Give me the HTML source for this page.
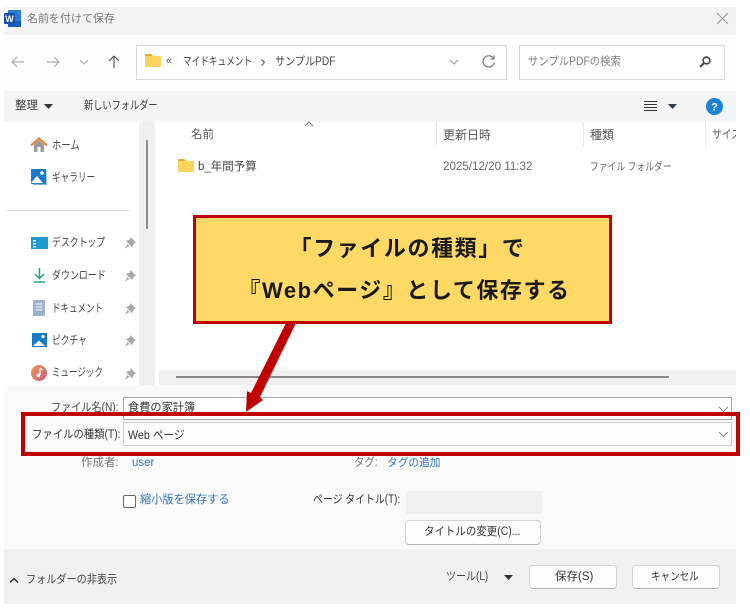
<!DOCTYPE html>
<html lang="ja"><head><meta charset="utf-8"><style>
html,body{margin:0;padding:0;background:#fff}
#p{position:relative;width:750px;height:610px;overflow:hidden;background:#fff;font-family:"Liberation Sans","Noto Sans CJK JP",sans-serif;font-size:11.5px;color:#333}
#p div,#p svg{position:absolute}
.t{white-space:nowrap;line-height:16px;height:16px;transform-origin:0 50%}
.g{color:#666}.b{color:#2f74b8}
.btn{background:#fdfdfd;border:1px solid #d2d2d2;border-bottom-color:#b5b5b5;border-radius:4px;box-sizing:border-box;text-align:center;color:#333}
.box{background:#fff;border:1px solid #d9d9d9;box-sizing:border-box}
</style></head><body><div id="p">
<div style="left:4px;top:7px;width:732px;height:28px;background:#f3f3f3"></div>
<div style="left:4px;top:35px;width:732px;height:87px;background:#fdfdfd"></div>
<div style="left:4px;top:91px;width:732px;height:31px;background:#f3f4f6"></div>
<div style="left:4px;top:122px;width:135px;height:263px;background:#fff"></div>
<div style="left:139px;top:122px;width:16px;height:263px;background:#efefef"></div>
<div style="left:146px;top:140px;width:2px;height:89px;background:#8d8d8d"></div>
<div style="left:159px;top:370px;width:577px;height:15px;background:#f1f1f1"></div>
<div style="left:176px;top:376px;width:493px;height:2px;background:#8a8a8a"></div>
<div style="left:4px;top:385px;width:732px;height:164px;background:#f9f9f9"></div>
<div style="left:4px;top:549px;width:732px;height:55px;background:#f0f0f0"></div>

<svg style="left:4px;top:10px" width="17" height="17" viewBox="0 0 17 17"><rect x="4" y="0" width="13" height="17" rx="1" fill="#2b7cd3"/><rect x="4" y="11" width="13" height="6" fill="#185abd"/><rect x="0" y="3" width="11" height="11" rx="1" fill="#1650a8"/><text x="5.5" y="12" font-size="9" font-weight="700" fill="#fff" text-anchor="middle" font-family="Liberation Sans">W</text></svg>
<div class="t" style="left:27px;top:11px;color:#777;font-size:11px">名前を付けて保存</div>
<svg style="left:716px;top:12px" width="13" height="13" viewBox="0 0 13 13"><path d="M1 1L12 12M12 1L1 12" stroke="#999" stroke-width="1.1" fill="none"/></svg>

<svg style="left:10px;top:54px" width="120" height="16" viewBox="0 0 120 16" fill="none"><path d="M2 8H14M2 8L7 3M2 8L7 13" stroke="#aaa" stroke-width="1.2"/><path d="M37 8H49M49 8L44 3M49 8L44 13" stroke="#aaa" stroke-width="1.2"/><path d="M70 6L74 10L78 6" stroke="#aaa" stroke-width="1.2"/><path d="M104 2V14M104 2L99 7M104 2L109 7" stroke="#555" stroke-width="1.2"/></svg>
<div class="box" style="left:136px;top:45px;width:371px;height:35px"></div>
<svg style="left:144px;top:53px" width="18" height="16" viewBox="0 0 18 16"><path d="M1 2Q1 1 2 1H7L9 3H1Z" fill="#e8a820"/><rect x="1" y="3" width="16" height="11" rx="1" fill="#fbd35f"/></svg>
<div class="t" style="left:166px;top:53px;font-size:11px;color:#555">«</div>
<div class="t" style="left:183px;top:54px;color:#444;transform:scaleX(.75)">マイドキュメント</div>
<svg style="left:260px;top:58px" width="6" height="9" viewBox="0 0 6 9"><path d="M1.5 1.5L4.5 4.5L1.5 7.5" stroke="#555" stroke-width="1.1" fill="none"/></svg>
<div class="t" style="left:275px;top:54px;color:#444;transform:scaleX(.88)">サンプルPDF</div>
<svg style="left:449px;top:59px" width="10" height="7" viewBox="0 0 10 7"><path d="M1 1L5 5L9 1" stroke="#999" stroke-width="1.1" fill="none"/></svg>
<svg style="left:481px;top:54px" width="15" height="15" viewBox="0 0 15 15"><path d="M12.5 4.5A5.6 5.6 0 1 0 13.2 8.5" stroke="#777" stroke-width="1.2" fill="none"/><path d="M13 1.5V5H9.5" stroke="#777" stroke-width="1.2" fill="none"/></svg>
<div class="box" style="left:519px;top:45px;width:206px;height:35px"></div>
<div class="t g" style="left:528px;top:54px;color:#808080;transform:scaleX(.9)">サンプルPDFの検索</div>
<svg style="left:698px;top:55px" width="14" height="14" viewBox="0 0 14 14"><circle cx="8.5" cy="5.5" r="3.4" stroke="#444" stroke-width="1.6" fill="none"/><path d="M6 8L2 12" stroke="#444" stroke-width="2"/></svg>

<div class="t" style="left:15px;top:98px;color:#3a3a3a">整理</div>
<svg style="left:44px;top:104px" width="9" height="5" viewBox="0 0 9 5"><path d="M0 0H9L4.5 5Z" fill="#333"/></svg>
<div class="t" style="left:84px;top:98px;color:#3a3a3a;transform:scaleX(.8)">新しいフォルダー</div>
<svg style="left:644px;top:100px" width="13" height="12" viewBox="0 0 13 12"><path d="M0 1.5H13M0 4.5H13M0 7.5H13M0 10.5H13" stroke="#333" stroke-width="1"/></svg>
<svg style="left:668px;top:104px" width="9" height="5" viewBox="0 0 9 5"><path d="M0 0H9L4.5 5Z" fill="#2c3e50"/></svg>
<svg style="left:706px;top:98px" width="17" height="17" viewBox="0 0 17 17"><circle cx="8.5" cy="8.5" r="8.5" fill="#1a83d4"/><text x="8.5" y="12.5" font-size="11" font-weight="700" fill="#fff" text-anchor="middle" font-family="Liberation Sans">?</text></svg>

<div class="t" style="left:191px;top:127px;color:#555">名前</div>
<svg style="left:304px;top:121px" width="10" height="6" viewBox="0 0 10 6"><path d="M1 5L5 1L9 5" stroke="#777" stroke-width="1" fill="none"/></svg>
<div style="left:436px;top:122px;width:1px;height:25px;background:#e6e6e6"></div>
<div style="left:583px;top:122px;width:1px;height:25px;background:#e6e6e6"></div>
<div style="left:705px;top:122px;width:1px;height:25px;background:#e6e6e6"></div>
<div class="t" style="left:443px;top:127px;color:#555;font-size:12px">更新日時</div>
<div class="t" style="left:590px;top:127px;color:#555;font-size:12px">種類</div>
<div style="left:712px;top:122px;width:24px;height:25px;overflow:hidden"><div class="t" style="left:0;top:5px;color:#555;transform:scaleX(.85)">サイズ</div></div>

<svg style="left:177px;top:158px" width="18" height="16" viewBox="0 0 18 16"><path d="M1 2Q1 1 2 1H7L9 3H1Z" fill="#e8a820"/><rect x="1" y="3" width="16" height="11" rx="1" fill="#fbd35f"/></svg>
<div class="t" style="left:198px;top:159px;color:#444">b_年間予算</div>
<div class="t g" style="left:443px;top:159px;font-size:11.6px">2025/12/20 11:32</div>
<div class="t g" style="left:590px;top:159px;font-size:11px;transform:scaleX(.8)">ファイル フォルダー</div>

<svg style="left:30px;top:137px" width="18" height="16" viewBox="0 0 18 16"><path d="M4 7.5V15H14V7.5L9 3Z" fill="#9b9b9b"/><rect x="7.5" y="10" width="3" height="5" fill="#fff"/><path d="M1 8.5L9 1.5L17 8.5" stroke="#e58a3c" stroke-width="2.2" fill="none"/></svg>
<div class="t" style="left:52px;top:138px;color:#444;transform:scaleX(.81)">ホーム</div>
<svg style="left:31px;top:169px" width="16" height="17" viewBox="0 0 16 17"><rect x="0" y="0" width="15" height="15" fill="#1c78c8"/><circle cx="11" cy="4" r="1.8" fill="#fff"/><path d="M0 14L6 7L12 14Z" fill="#fff"/><path d="M2 15.5H16V2" stroke="#7fb4e2" stroke-width="1.3" fill="none"/></svg>
<div class="t" style="left:52px;top:170px;color:#444;transform:scaleX(.75)">ギャラリー</div>
<div style="left:7px;top:210px;width:122px;height:1px;background:#ddd"></div>

<svg style="left:31px;top:237px" width="17" height="13" viewBox="0 0 17 13"><rect width="17" height="12" fill="#1f9ccf"/><rect x="2" y="3" width="3" height="1.5" fill="#d5f2fb"/><rect x="2" y="6" width="3" height="1.5" fill="#d5f2fb"/><rect x="2" y="9" width="3" height="1.5" fill="#d5f2fb"/></svg>
<div class="t" style="left:52px;top:235px;color:#444;transform:scaleX(.77)">デスクトップ</div>
<svg style="left:33px;top:267px" width="13" height="17" viewBox="0 0 13 17" fill="none"><path d="M6.5 1V11M2 7L6.5 11.5L11 7" stroke="#22a57c" stroke-width="1.5"/><path d="M1 15H12" stroke="#22a57c" stroke-width="1.5"/></svg>
<div class="t" style="left:52px;top:268px;color:#444;transform:scaleX(.78)">ダウンロード</div>
<svg style="left:33px;top:300px" width="12" height="16" viewBox="0 0 12 16"><rect width="12" height="16" fill="#9db3cd"/><path d="M2.5 4H9.5M2.5 7H9.5M2.5 10H9.5" stroke="#fff" stroke-width="1"/></svg>
<div class="t" style="left:52px;top:301px;color:#444;transform:scaleX(.74)">ドキュメント</div>
<svg style="left:32px;top:333px" width="15" height="14" viewBox="0 0 15 14"><rect width="15" height="14" fill="#1c78c8"/><circle cx="11" cy="3.5" r="1.6" fill="#fff"/><path d="M1 13L7 7.5L13 13Z" fill="#fff"/></svg>
<div class="t" style="left:52px;top:333px;color:#444;transform:scaleX(.76)">ピクチャ</div>
<svg style="left:31px;top:365px" width="16" height="16" viewBox="0 0 16 16"><defs><linearGradient id="m" x1="0" y1="0" x2="1" y2="1"><stop offset="0" stop-color="#ee9a55"/><stop offset="1" stop-color="#c85a80"/></linearGradient></defs><circle cx="8" cy="8" r="8" fill="url(#m)"/><path d="M9 3.5V10" stroke="#fff" stroke-width="1.3"/><circle cx="7.3" cy="10.5" r="1.8" fill="#fff"/><path d="M9 3.5L11.5 5" stroke="#fff" stroke-width="1.3"/></svg>
<div class="t" style="left:52px;top:365px;color:#444;transform:scaleX(.74)">ミュージック</div>

<svg style="left:124px;top:237px" width="12" height="142" viewBox="0 0 12 142" fill="#a8a8a8"><path d="M6.5 0L12 5.5L10.5 6L8 10L2 4L6 2.5ZM3.5 7L5.5 9L1 11.5Z"/><path transform="translate(0,33)" d="M6.5 0L12 5.5L10.5 6L8 10L2 4L6 2.5ZM3.5 7L5.5 9L1 11.5Z"/><path transform="translate(0,66)" d="M6.5 0L12 5.5L10.5 6L8 10L2 4L6 2.5ZM3.5 7L5.5 9L1 11.5Z"/><path transform="translate(0,98)" d="M6.5 0L12 5.5L10.5 6L8 10L2 4L6 2.5ZM3.5 7L5.5 9L1 11.5Z"/><path transform="translate(0,131)" d="M6.5 0L12 5.5L10.5 6L8 10L2 4L6 2.5ZM3.5 7L5.5 9L1 11.5Z"/></svg>

<div class="t" style="left:51px;top:400px;color:#444;transform:scaleX(.88)">ファイル名(N):</div>
<div style="left:123px;top:397px;width:609px;height:23px;background:#fff;border:1px solid #aaa;box-sizing:border-box"></div>
<div class="t" style="left:128px;top:400px;color:#333;font-size:11.2px">食費の家計簿</div>
<svg style="left:718px;top:406px" width="11" height="7" viewBox="0 0 11 7"><path d="M1 1L5.5 5.5L10 1" stroke="#888" stroke-width="1" fill="none"/></svg>
<div style="left:123px;top:422px;width:609px;height:24px;background:#fdfdfd;border:1px solid #ccc;box-sizing:border-box"></div>
<div class="t" style="left:32px;top:427px;color:#333;transform:scaleX(.9)">ファイルの種類(T):</div>
<div class="t" style="left:128px;top:427px;color:#333;font-size:12px;transform:scaleX(.89)">Web ページ</div>
<svg style="left:718px;top:431px" width="11" height="7" viewBox="0 0 11 7"><path d="M1 1L5.5 5.5L10 1" stroke="#888" stroke-width="1" fill="none"/></svg>

<div class="t g" style="left:81px;top:455px;color:#777">作成者:</div>
<div class="t b" style="left:132px;top:455px">user</div>
<div class="t g" style="left:354px;top:455px;color:#777;transform:scaleX(.9)">タグ:</div>
<div class="t b" style="left:387px;top:455px;font-size:10.7px">タグの追加</div>
<div style="left:123px;top:495px;width:13px;height:13px;background:#fff;border:1px solid #666;border-radius:2px;box-sizing:border-box"></div>
<div class="t b" style="left:140px;top:492px;font-size:11.2px">縮小版を保存する</div>
<div class="t" style="left:313px;top:492px;color:#333;transform:scaleX(.86)">ページ タイトル(T):</div>
<div style="left:406px;top:491px;width:136px;height:23px;background:#f0f0f0"></div>
<div class="btn" style="left:405px;top:520px;width:136px;height:25px"></div>
<div class="t" style="left:424px;top:524px;color:#333;transform:scaleX(.91)">タイトルの変更(C)...</div>

<svg style="left:9px;top:577px" width="10" height="7" viewBox="0 0 10 7"><path d="M1 5.5L5 1.5L9 5.5" stroke="#333" stroke-width="1.5" fill="none"/></svg>
<div class="t" style="left:26px;top:572px;color:#444;transform:scaleX(.88)">フォルダーの非表示</div>
<div class="t" style="left:446px;top:569px;color:#444;transform:scaleX(.87)">ツール(L)</div>
<svg style="left:504px;top:575px" width="9" height="5" viewBox="0 0 9 5"><path d="M0 0H9L4.5 5Z" fill="#333"/></svg>
<div class="btn" style="left:529px;top:565px;width:88px;height:24px"></div>
<div class="t" style="left:555px;top:569px;color:#333">保存(S)</div>
<div class="btn" style="left:632px;top:565px;width:88px;height:24px"></div>
<div class="t" style="left:651px;top:569px;color:#333;transform:scaleX(.83)">キャンセル</div>

<div style="left:193px;top:215px;width:419px;height:109px;background:#ffd966;border:3.5px solid #c00000;box-sizing:border-box"></div>
<div class="t" style="left:198px;top:234px;width:419px;height:30px;line-height:30px;text-align:center;font-size:22px;font-weight:700;color:#1a1a1a;letter-spacing:1.6px;transform:none">「ファイルの種類」で</div>
<div class="t" style="left:195px;top:276px;width:419px;height:30px;line-height:30px;text-align:center;font-size:22px;font-weight:700;color:#1a1a1a;letter-spacing:1.55px;transform:none">『Webページ』として保存する</div>
<svg style="left:240px;top:322px" width="60" height="92" viewBox="0 0 60 92"><path d="M46 1L56 1L20 75L23 78L6 90L7 69L11 71Z" fill="#c00000"/></svg>
<div style="left:21px;top:412px;width:719px;height:44px;border:4px solid #c00000;box-sizing:border-box"></div>
</div></body></html>
